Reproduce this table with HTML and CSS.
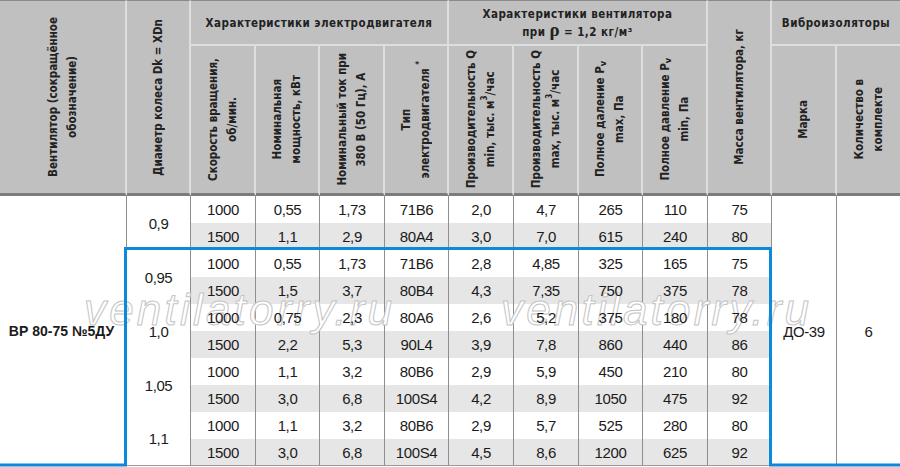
FILE: index.html
```html
<!DOCTYPE html>
<html lang="ru">
<head>
<meta charset="utf-8">
<title>ВР 80-75 №5ДУ</title>
<link rel="stylesheet" href="styles.css">
</head>
<body>
<div class="sheet">
  <div class="grid">
    <!-- header row 1 -->
    <div class="h r2"><span class="rot">Вентилятор (сокращённое<br>обозначение)</span></div>
    <div class="h r2"><span class="rot">Диаметр колеса Dk = XDn</span></div>
    <div class="h top c4"><span>Характеристики электродвигателя</span></div>
    <div class="h top c4"><span>Характеристики вентилятора<br>при <b class="rho">ρ</b> = 1,2 кг/м³</span></div>
    <div class="h r2"><span class="rot">Масса вентилятора, кг</span></div>
    <div class="h top c2 last"><span>Виброизоляторы</span></div>
    <!-- header row 2 -->
    <div class="h lo"><span class="rot">Скорость вращения,<br>об/мин.</span></div>
    <div class="h lo"><span class="rot">Номинальная<br>мощность, кВт</span></div>
    <div class="h lo"><span class="rot">Номинальный ток при<br>380 В (50 Гц), А</span></div>
    <div class="h lo"><span class="rot">Тип<br>электродвигателя <span class="sp">*</span></span></div>
    <div class="h lo"><span class="rot">Производительность Q<br>min, тыс. м<span class="sp">3</span>/час</span></div>
    <div class="h lo"><span class="rot">Производительность Q<br>max, тыс. м<span class="sp">3</span>/час</span></div>
    <div class="h lo"><span class="rot">Полное даление P<span class="sb">v</span><br>max, Па</span></div>
    <div class="h lo"><span class="rot">Полное давление P<span class="sb">v</span><br>min, Па</span></div>
    <div class="h lo"><span class="rot">Марка</span></div>
    <div class="h lo last"><span class="rot">Количество в<br>комплекте</span></div>

    <!-- body row 1 -->
    <div class="d name r10"><span>ВР 80-75 №5ДУ</span></div>
    <div class="d r2"><span>0,9</span></div>
    <div class="d"><span>1000</span></div><div class="d"><span>0,55</span></div><div class="d"><span>1,73</span></div><div class="d"><span>71В6</span></div><div class="d"><span>2,0</span></div><div class="d"><span>4,7</span></div><div class="d"><span>265</span></div><div class="d"><span>110</span></div><div class="d"><span>75</span></div>
    <div class="d r10"><span>ДО-39</span></div>
    <div class="d r10 last"><span>6</span></div>
    <!-- row 2 -->
    <div class="d g"><span>1500</span></div><div class="d g"><span>1,1</span></div><div class="d g"><span>2,9</span></div><div class="d g"><span>80А4</span></div><div class="d g"><span>3,0</span></div><div class="d g"><span>7,0</span></div><div class="d g"><span>615</span></div><div class="d g"><span>240</span></div><div class="d g"><span>80</span></div>
    <!-- row 3 -->
    <div class="d r2"><span>0,95</span></div>
    <div class="d"><span>1000</span></div><div class="d"><span>0,55</span></div><div class="d"><span>1,73</span></div><div class="d"><span>71В6</span></div><div class="d"><span>2,8</span></div><div class="d"><span>4,85</span></div><div class="d"><span>325</span></div><div class="d"><span>165</span></div><div class="d"><span>75</span></div>
    <!-- row 4 -->
    <div class="d g"><span>1500</span></div><div class="d g"><span>1,5</span></div><div class="d g"><span>3,7</span></div><div class="d g"><span>80В4</span></div><div class="d g"><span>4,3</span></div><div class="d g"><span>7,35</span></div><div class="d g"><span>750</span></div><div class="d g"><span>375</span></div><div class="d g"><span>78</span></div>
    <!-- row 5 -->
    <div class="d r2"><span>1,0</span></div>
    <div class="d"><span>1000</span></div><div class="d"><span>0,75</span></div><div class="d"><span>2,3</span></div><div class="d"><span>80А6</span></div><div class="d"><span>2,6</span></div><div class="d"><span>5,2</span></div><div class="d"><span>375</span></div><div class="d"><span>180</span></div><div class="d"><span>78</span></div>
    <!-- row 6 -->
    <div class="d g"><span>1500</span></div><div class="d g"><span>2,2</span></div><div class="d g"><span>5,3</span></div><div class="d g"><span>90L4</span></div><div class="d g"><span>3,9</span></div><div class="d g"><span>7,8</span></div><div class="d g"><span>860</span></div><div class="d g"><span>440</span></div><div class="d g"><span>86</span></div>
    <!-- row 7 -->
    <div class="d r2"><span>1,05</span></div>
    <div class="d"><span>1000</span></div><div class="d"><span>1,1</span></div><div class="d"><span>3,2</span></div><div class="d"><span>80В6</span></div><div class="d"><span>2,9</span></div><div class="d"><span>5,9</span></div><div class="d"><span>450</span></div><div class="d"><span>210</span></div><div class="d"><span>80</span></div>
    <!-- row 8 -->
    <div class="d g"><span>1500</span></div><div class="d g"><span>3,0</span></div><div class="d g"><span>6,8</span></div><div class="d g"><span>100S4</span></div><div class="d g"><span>4,2</span></div><div class="d g"><span>8,9</span></div><div class="d g"><span>1050</span></div><div class="d g"><span>475</span></div><div class="d g"><span>92</span></div>
    <!-- row 9 -->
    <div class="d r2 b"><span>1,1</span></div>
    <div class="d"><span>1000</span></div><div class="d"><span>1,1</span></div><div class="d"><span>3,2</span></div><div class="d"><span>80В6</span></div><div class="d"><span>2,9</span></div><div class="d"><span>5,7</span></div><div class="d"><span>525</span></div><div class="d"><span>280</span></div><div class="d"><span>80</span></div>
    <!-- row 10 -->
    <div class="d g b"><span>1500</span></div><div class="d g b"><span>3,0</span></div><div class="d g b"><span>6,8</span></div><div class="d g b"><span>100S4</span></div><div class="d g b"><span>4,5</span></div><div class="d g b"><span>8,6</span></div><div class="d g b"><span>1200</span></div><div class="d g b"><span>625</span></div><div class="d g b"><span>92</span></div>
  </div>

  <div class="wm wm1">ventilatorry.ru</div>
  <div class="wm wm2">ventilatorry.ru</div>

  <svg class="frame" width="900" height="467" viewBox="0 0 900 467">
    <polyline points="0,465 125.5,465 125.5,248.5 770.5,248.5 770.5,465 900,465" fill="none" stroke="#0b8ad9" stroke-width="3" stroke-linejoin="miter"/>
  </svg>
</div>
</body>
</html>
```

FILE: styles.css
```css
* { box-sizing: border-box; }

html, body {
  margin: 0;
  padding: 0;
  background: #ffffff;
}

.sheet {
  position: relative;
  width: 900px;
  height: 467px;
  overflow: hidden;
}

.grid {
  display: grid;
  grid-template-columns: 127px 64px 65px 64px 65px 64px 65px 65px 64px 65px 64px 65px 63px;
  grid-template-rows: 46px 150px repeat(10, 27px);
}

/* header */
.h {
  background: #c0c0c0;
  border-right: 2px solid #dedede;
  display: flex;
  align-items: center;
  justify-content: center;
  text-align: center;
  color: #222222;
  font-family: "DejaVu Sans Condensed", "Liberation Sans Narrow", "Liberation Sans", sans-serif;
  font-weight: bold;
  font-size: 11.5px;
  line-height: 19px;
  letter-spacing: 0.5px;
}

.h.r2 {
  grid-row: span 2;
  border-top: 1px solid #8a8a8a;
  border-bottom: 3px solid #7c7c7c;
}

.h.top {
  border-top: 1px solid #8a8a8a;
  border-bottom: 2px solid #dedede;
  line-height: 18px;
}

.h.lo {
  border-bottom: 3px solid #7c7c7c;
}

.h.c4 { grid-column: span 4; }
.h.c2 { grid-column: span 2; }
.h.last { border-right: none; }

.rot {
  writing-mode: vertical-rl;
  transform: rotate(180deg);
  white-space: nowrap;
  letter-spacing: 0;
}

.rho {
  font-size: 19px;
  font-weight: bold;
  font-family: "Liberation Serif", serif;
  letter-spacing: 0;
  line-height: 10px;
}

.sp {
  font-size: 8px;
  vertical-align: super;
  line-height: 0;
  letter-spacing: 0;
}

.sb {
  font-size: 9px;
  vertical-align: sub;
  line-height: 0;
  letter-spacing: 0;
}

/* body */
.d {
  border-right: 1px solid #8e8e8e;
  display: flex;
  align-items: center;
  justify-content: center;
  font-family: "Liberation Sans", Arial, sans-serif;
  font-size: 15px;
  letter-spacing: -0.4px;
  color: #1b1b1b;
  background: #ffffff;
}

.d > span {
  position: relative;
  z-index: 2;
}

.d.g { background: #e6e6e6; }
.d.r2 { grid-row: span 2; }
.d.r10 { grid-row: span 10; }
.d.last { border-right: none; }
.d.b { border-bottom: 1px solid #9a9a9a; }

.d.name {
  font-weight: bold;
  font-size: 14px;
  letter-spacing: 0;
  padding-right: 3px;
}

/* watermark */
.wm {
  position: absolute;
  top: 286px;
  z-index: 1;
  font-family: "Liberation Sans", Arial, sans-serif;
  font-style: italic;
  font-size: 44px;
  line-height: 48px;
  letter-spacing: 3.2px;
  color: #ffffff;
  -webkit-text-stroke: 1px #c4c4c4;
  white-space: nowrap;
  pointer-events: none;
}

.wm1 { left: 84px; }
.wm2 { left: 501px; }

/* highlight frame */
.frame {
  position: absolute;
  left: 0;
  top: 0;
  z-index: 3;
  pointer-events: none;
}
```
